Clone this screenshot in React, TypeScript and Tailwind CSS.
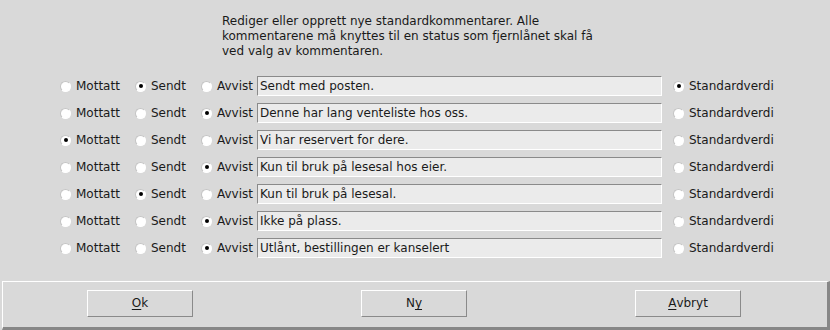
import React from "react";

type Status = 0 | 1 | 2;

const rows: { status: Status; text: string; def: boolean }[] = [
  { status: 1, text: "Sendt med posten.", def: true },
  { status: 2, text: "Denne har lang venteliste hos oss.", def: false },
  { status: 0, text: "Vi har reservert for dere.", def: false },
  { status: 2, text: "Kun til bruk på lesesal hos eier.", def: false },
  { status: 1, text: "Kun til bruk på lesesal.", def: false },
  { status: 2, text: "Ikke på plass.", def: false },
  { status: 2, text: "Utlånt, bestillingen er kanselert", def: false },
];

function Radio({ checked }: { checked: boolean }) {
  return (
    <span className="relative flex h-[11px] w-[11px] shrink-0 items-center justify-center rounded-full border border-t-[#c4c4c4] border-l-[#c4c4c4] border-b-white border-r-white bg-white">
      {checked && <span className="h-[4px] w-[4px] rounded-full bg-black" />}
    </span>
  );
}

function RadioLabel({ checked, label, w }: { checked: boolean; label: string; w: string }) {
  return (
    <div className={`flex items-center ${w}`}>
      <Radio checked={checked} />
      <span className="ml-[5px] text-[#1a1a1a]">{label}</span>
    </div>
  );
}

function Btn({ children }: { children: React.ReactNode }) {
  return (
    <div className="flex h-[27px] w-[106px] items-center justify-center border border-t-white border-l-white border-b-[#8a8a8a] border-r-[#8a8a8a] bg-[#d9d9d9] text-[#1a1a1a]">
      {children}
    </div>
  );
}

export default function App() {
  return (
    <div
      className="flex h-[330px] w-[830px] flex-col bg-[#d9d9d9] text-[12px] leading-[15px]"
      style={{ fontFamily: '"DejaVu Sans", sans-serif' }}
    >
      <div className="h-[281px] shrink-0">
        <div className="pl-[222px] pt-[14px] text-[#1a1a1a]">
          <div>Rediger eller opprett nye standardkommentarer. Alle</div>
          <div>kommentarene må knyttes til en status som fjernlånet skal få</div>
          <div>ved valg av kommentaren.</div>
        </div>
        <div className="mt-[17px] flex flex-col gap-[7px] pl-[60px]">
          {rows.map((r, i) => (
            <div key={i} className="flex h-[20px] items-center">
              <RadioLabel checked={r.status === 0} label="Mottatt" w="w-[75px]" />
              <RadioLabel checked={r.status === 1} label="Sendt" w="w-[66px]" />
              <RadioLabel checked={r.status === 2} label="Avvist" w="w-[56px]" />
              <div className="flex h-[20px] w-[405px] items-center border border-t-[#8a8a8a] border-l-[#8a8a8a] border-b-white border-r-white bg-[#ebebeb] pl-[2px] text-[#1a1a1a]">
                {r.text}
              </div>
              <div className="ml-[11px]">
                <RadioLabel checked={r.def} label="Standardverdi" w="w-[110px]" />
              </div>
            </div>
          ))}
        </div>
      </div>
      <div className="ml-[2px] flex flex-1 border-t border-l border-t-white border-l-white border-r-[3px] border-b-[3px] border-r-[#878787] border-b-[#878787] pl-[84px] pt-[8px]">
        <div className="flex gap-[168px]">
          <Btn>
            <span className="underline underline-offset-2">O</span>k
          </Btn>
          <Btn>
            N<span className="underline underline-offset-2">y</span>
          </Btn>
          <Btn>
            <span className="underline underline-offset-2">A</span>vbryt
          </Btn>
        </div>
      </div>
    </div>
  );
}
